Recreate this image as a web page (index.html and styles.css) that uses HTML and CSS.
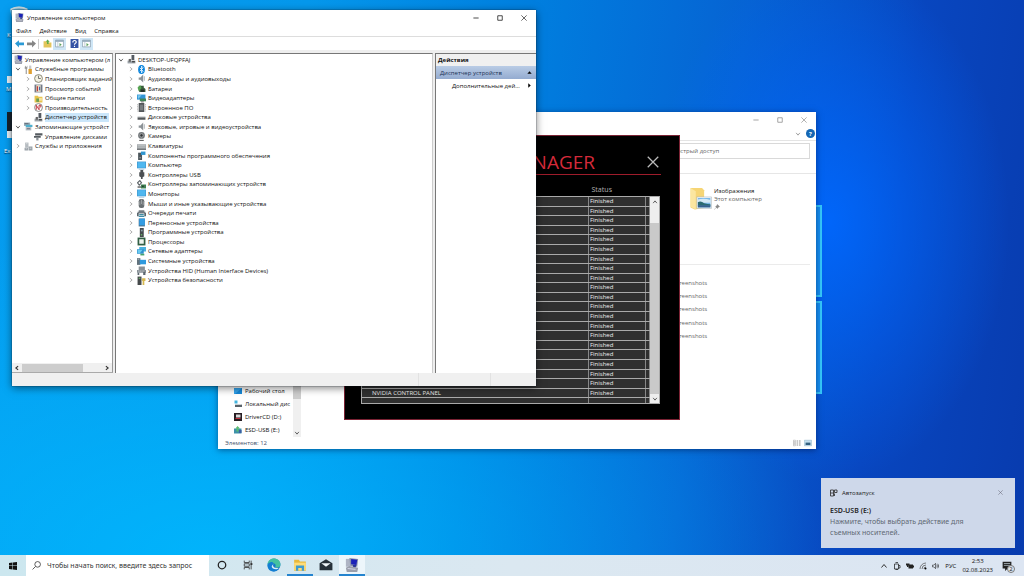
FILE: index.html
```html
<!DOCTYPE html>
<html lang="ru">
<head>
<meta charset="utf-8">
<meta name="viewport" content="width=device-width, initial-scale=1">
<title>Управление компьютером</title>
<link rel="stylesheet" href="styles.css">
</head>
<body>
<svg class="sprite" aria-hidden="true">
  <symbol id="down" viewBox="0 0 16 16"><path d="M3 5l5 6 5-6" fill="none" stroke="#333" stroke-width="2"/></symbol>
  <symbol id="up" viewBox="0 0 16 16"><path d="M3 11l5-6 5 6" fill="none" stroke="#333" stroke-width="2"/></symbol>
  <symbol id="right" viewBox="0 0 16 16"><path d="M5 3l6 5-6 5" fill="none" stroke="#999" stroke-width="2"/></symbol>
  <symbol id="left" viewBox="0 0 16 16"><path d="M11 3L5 8l6 5" fill="none" stroke="#333" stroke-width="3"/></symbol>
  <symbol id="forward" viewBox="0 0 16 16"><path d="M5 3l6 5-6 5" fill="none" stroke="#333" stroke-width="3"/></symbol>
  <symbol id="min" viewBox="0 0 16 16"><path d="M1 8h14" stroke="currentColor" stroke-width="2"/></symbol>
  <symbol id="max" viewBox="0 0 16 16"><path d="M2 2h12v12H2z" fill="none" stroke="currentColor" stroke-width="2"/></symbol>
  <symbol id="close" viewBox="0 0 16 16"><path d="M1 1l14 14M15 1L1 15" fill="none" stroke="currentColor" stroke-width="1.7"/></symbol>
  <symbol id="mmc" viewBox="0 0 16 16"><path d="M1 1h5v9H1z" fill="#aeb4c4"/><path d="M5 0l10 1-1 9-8-1z" fill="#8a93ad"/><path d="M7 1l7 1-1 6-6-1z" fill="#1b22b8"/><path d="M9 8h4l-1 3H9z" fill="#2c3598"/><path d="M1 11l4-2 10 2-1 5H2z" fill="#9a9fac"/><path d="M3 12l9 1" stroke="#dde"/></symbol>
  <symbol id="tools" viewBox="0 0 16 16"><path d="M2 1l2 3 2-3v5L5 7v9H3V7L1 6z" fill="#999"/><path d="M9 1h4v7H9z" fill="#c9c9c9"/><path d="M8 7h6v9H8z" fill="#e0a030"/></symbol>
  <symbol id="sched" viewBox="0 0 16 16"><circle cx="8" cy="8" r="7" fill="#f3f1e2" stroke="#85816e" stroke-width="1.6"/><path d="M8 3v5h4" fill="none" stroke="#555" stroke-width="1.4"/></symbol>
  <symbol id="event" viewBox="0 0 16 16"><path d="M1 1h14v14H1z" fill="#707887"/><path d="M4 2h8v12H4z" fill="#e9dfc6"/><path d="M6 4v9" stroke="#c03030" stroke-width="2"/><path d="M10 5v6" stroke="#365fa8" stroke-width="2"/></symbol>
  <symbol id="share" viewBox="0 0 16 16"><path d="M1 3h6l1 2h7v10H1z" fill="#e8c44e"/><path d="M4 8h5v6H4z" fill="#6d9d50"/><path d="M9 7h5v5H9z" fill="#f6e39c"/></symbol>
  <symbol id="perf" viewBox="0 0 16 16"><circle cx="8" cy="8" r="7" fill="#fff" stroke="#777" stroke-width="1.5"/><path d="M4 12V4l5 8V4h3v4" fill="none" stroke="#c2303b" stroke-width="1.7"/></symbol>
  <symbol id="dev" viewBox="0 0 16 16"><path d="M8 0h5v9H8z" fill="#555b62"/><path d="M1 10h14v5H1z" fill="#9ba2a8"/><path d="M3 7h4v5H3z" fill="#666"/><path d="M9 12h5" stroke="#333" stroke-width="2"/></symbol>
  <symbol id="storage" viewBox="0 0 16 16"><path d="M0 1h11v6H0z" fill="#99abb5"/><path d="M3 5h12v4H3z" fill="#4fb1cf"/><path d="M3 9h10v6H3z" fill="#b7bfc5"/><path d="M1 3h7M5 12h6" stroke="#334"/></symbol>
  <symbol id="disks" viewBox="0 0 16 16"><path d="M2 2h13v4H2zM0 7h12v3H0z" fill="#555b60"/><path d="M4 10h4v5H4z" fill="#8a9096"/></symbol>
  <symbol id="services" viewBox="0 0 16 16"><path d="M2 1h6v9H2z" fill="#b6bcc1"/><path d="M1 10h6v5H1zM8 8h7v7H8z" fill="#99a1a8"/><path d="M3 12h2M10 11h3M4 3h2" stroke="#fff"/></symbol>
  <symbol id="bt" viewBox="0 0 16 16"><ellipse cx="8" cy="8" rx="6" ry="8" fill="#0a84dc"/><path d="M5 5l6 6-3 3V2l3 3-6 6" fill="none" stroke="#fff" stroke-width="1.4"/></symbol>
  <symbol id="audio" viewBox="0 0 16 16"><path d="M3 6h3l5-5v14l-5-5H3z" fill="#8c9297"/><path d="M13 4v8" stroke="#b6babd" stroke-width="2"/></symbol>
  <symbol id="battery" viewBox="0 0 16 16"><path d="M3 3h9v3l3 3v5H4z" fill="#395c3c"/><path d="M1 6l5-4 2 5-5 6z" fill="#55a551"/><path d="M7 10h6v4H7z" fill="#292f2b"/></symbol>
  <symbol id="video" viewBox="0 0 16 16"><path d="M0 1h15v9H0z" fill="#3295d5"/><path d="M1 2h7L2 9z" fill="#7ac8ee"/><path d="M5 8h11v5H5z" fill="#42875a"/><path d="M7 13h5v2H7z" fill="#777"/></symbol>
  <symbol id="firmware" viewBox="0 0 16 16"><path d="M3 0h10v16H3z" fill="#53575a"/><path d="M5 3h6v10H5z" fill="#777d80"/><path d="M1 2v13M15 2v13" stroke="#888" stroke-dasharray="2 1"/></symbol>
  <symbol id="drive" viewBox="0 0 16 16"><path d="M1 6h14v3H1z" fill="#c4c7c9"/><path d="M1 8h14v4H1z" fill="#54585b"/></symbol>
  <symbol id="camera" viewBox="0 0 16 16"><circle cx="8" cy="6" r="6" fill="#73787b"/><circle cx="8" cy="6" r="3" fill="#303437" stroke="#ccc"/><path d="M4 14h8v2H4z" fill="#666"/></symbol>
  <symbol id="keyboard" viewBox="0 0 16 16"><path d="M0 4h16v9H0z" fill="#a0a5a8"/><path d="M1 6h14M1 9h14" stroke="#d6d9da"/><path d="M0 12h16v2H0z" fill="#666b6e"/></symbol>
  <symbol id="component" viewBox="0 0 16 16"><path d="M2 3h7v13H2z" fill="#4b555b"/><path d="M7 1h8v6H7z" fill="#3096cf"/><path d="M4 12h3" stroke="#ddd"/></symbol>
  <symbol id="monitor" viewBox="0 0 16 16"><path d="M0 1h16v12H0z" fill="#3f93ca"/><path d="M1 2h14v10H1z" fill="#4fb7ef"/><path d="M3 14h10v1H3z" fill="#73a5c6"/></symbol>
  <symbol id="usb" viewBox="0 0 16 16"><path d="M6 0h5v4h2v7l-3 2v3H7v-3l-3-2V4h2z" fill="#4c5053"/></symbol>
  <symbol id="scontrol" viewBox="0 0 16 16"><path d="M5 1l3 4-4 4-3-4z" fill="none" stroke="#5d6468" stroke-width="2"/><path d="M1 11h6v3H1z" fill="#777"/><path d="M7 8h9v7H7z" fill="#3f8052"/><path d="M9 10h3v2H9z" fill="#222"/></symbol>
  <symbol id="mouse" viewBox="0 0 16 16"><rect x="3" y="0" width="10" height="16" rx="4" fill="#686e71"/><path d="M8 1v8M5 4v7M11 4v7" stroke="#c4c8ca"/></symbol>
  <symbol id="printer" viewBox="0 0 16 16"><path d="M3 2h10v3H3zM1 5h14v3H1z" fill="#717b82"/><path d="M0 7h3v6H0zM13 7h3v6h-3z" fill="#59656c"/><path d="M4 9h8v2H4zM3 12h10v2H3z" fill="#408ca4"/></symbol>
  <symbol id="portable" viewBox="0 0 16 16"><path d="M3 1h11v14H3z" fill="#48728e"/><path d="M4 1h10v12H4z" fill="#349de3"/></symbol>
  <symbol id="softdev" viewBox="0 0 16 16"><path d="M5 0h7v16H5z" fill="#454b4e"/><path d="M7 3h3v3H7z" fill="#8da1ac"/><circle cx="8" cy="12" r="1.5" fill="#66ad64"/></symbol>
  <symbol id="cpu" viewBox="0 0 16 16"><path d="M1 1h14v14H1z" fill="#315e44"/><path d="M4 4h8v8H4z" fill="#eef3ee"/></symbol>
  <symbol id="net" viewBox="0 0 16 16"><path d="M4 0h12v8H4z" fill="#49b0de"/><path d="M0 4h12v8H0z" fill="#2e8fce"/><path d="M1 5h9l-5 6H1z" fill="#6bcaf0"/><path d="M6 12h7v3H6z" fill="#46a36d"/></symbol>
  <symbol id="sys" viewBox="0 0 16 16"><path d="M0 2h6v12H0z" fill="#62727c"/><path d="M5 5h11v8H5z" fill="#309ade"/><path d="M1 4h3" stroke="#ddd"/></symbol>
  <symbol id="hid" viewBox="0 0 16 16"><path d="M3 1h11v6H3zM0 7h16v5H0z" fill="#889096"/><path d="M1 12h3v4H1zM11 10h4v6h-4z" fill="#5d6770"/><path d="M2 9h11" stroke="#eee" stroke-dasharray="2 1"/></symbol>
  <symbol id="secure" viewBox="0 0 16 16"><path d="M1 1h7v15H1z" fill="#45494b"/><path d="M9 4h6v5h-2v7h-3V9H9z" fill="#d7b950"/><path d="M3 4h3" stroke="#6bb56c" stroke-width="2"/></symbol>
  <symbol id="pane" viewBox="0 0 16 16"><path d="M1 2h14v12H1z" fill="#fff" stroke="#71879a"/><path d="M1 2h14v3H1z" fill="#91a7b9"/><path d="M5 5v9" stroke="#91a7b9"/><path d="M8 7l4 3-4 3z" fill="#5ba05b"/></symbol>
</svg>

<main class="desktop">
  <div class="wallpaper" aria-hidden="true"><span class="glass glass-top"></span><span class="glass glass-bottom"></span></div>
  <div class="shortcuts">
    <svg class="bin" viewBox="0 0 24 16"><path d="M1 5c5-5 17-5 22 0l-3 11H4z" fill="#6fb8da"/><path d="M2 5c6-3 14-3 20 0" fill="none" stroke="#c9dce3" stroke-width="2"/></svg>
    <span class="shortcut-label first">К</span>
    <span class="shortcut-arrow upper"></span>
    <span class="shortcut-label second">M</span>
    <span class="shortcut-tile"></span>
    <span class="shortcut-arrow lower"></span>
    <span class="shortcut-label third">Ex</span>
  </div>

  <section class="window explorer" aria-label="Проводник">
    <header class="explorer-title">
      <div class="caption muted">
        <button aria-label="Свернуть"><svg><use href="#min"/></svg></button>
        <button aria-label="Развернуть"><svg><use href="#max"/></svg></button>
        <button aria-label="Закрыть"><svg><use href="#close"/></svg></button>
      </div>
    </header>
    <div class="ribbon">
      <button aria-label="Развернуть ленту"><svg class="icon-s"><use href="#down"/></svg></button>
      <button class="help" aria-label="Справка">?</button>
    </div>
    <div class="address"><input type="text" aria-label="Поиск" placeholder="Быстрый доступ"></div>
    <div class="explorer-body">
      <nav class="places">
        <ul>
          <li><svg viewBox="0 0 16 16"><path d="M0 2h16v12H0z" fill="#1588d8"/><path d="M0 2h16L2 14H0z" fill="#35a3eb"/></svg><a href="#">Рабочий стол</a></li>
          <li><svg viewBox="0 0 16 16"><path d="M1 1h6v6H1z" fill="#42b4df"/><path d="M2 9h14v5H2z" fill="#596269"/><path d="M2 8h13v2H2z" fill="#cdd2d4"/></svg><a href="#">Локальный дис</a></li>
          <li><svg viewBox="0 0 16 16"><path d="M0 0h16v16H0z" fill="#251d22"/><path d="M4 3h9v6H4z" fill="#d9d8d9"/><path d="M3 11h10" stroke="#c62e3c" stroke-width="2"/></svg><a href="#">DriverCD (D:)</a></li>
          <li><svg viewBox="0 0 16 16"><path d="M0 5h15v10H0z" fill="#3e91a9"/><path d="M7 0l5 5H9v6H5V5H3z" fill="#5bbd72"/><path d="M10 8h5v6h-5z" fill="#3c5fa4"/></svg><a href="#">ESD-USB (E:)</a></li>
        </ul>
      </nav>
      <div class="places-scroll"><span class="places-thumb"></span><svg class="icon-s"><use href="#down"/></svg></div>
      <div class="files">
        <article class="folder">
          <svg class="folder-icon" viewBox="0 0 42 44"><path d="M1 2h22l4 4v34l-18 3-8-4z" fill="#f6d575"/><path d="M1 2l10 6v35L1 38z" fill="#fbe6a0"/><path d="M13 19h28v22H13z" fill="#f5f8fa" stroke="#a5afb6"/><path d="M15 21h24v18H15z" fill="#79b8e8"/><path d="M15 24q12-3 24 1v5H15z" fill="#d5e9f5"/><path d="M15 29q6-3 12 2 7 2 12 2v3H15z" fill="#2c6b72"/><path d="M15 35h24v4H15z" fill="#37618e"/></svg>
          <div class="folder-text"><strong>Изображения</strong><span>Этот компьютер</span>
          <svg viewBox="0 0 16 16"><path d="M9 1l6 6-3 1-3 4-5-5 4-3zM5 10l-4 5" fill="#888" stroke="#777"/></svg></div>
        </article>
        <ul class="recent"><li>Screenshots</li><li>Screenshots</li><li>Screenshots</li><li>Screenshots</li><li>Screenshots</li></ul>
      </div>
    </div>
    <footer class="explorer-status"><span>Элементов: 12</span>
      <div class="views"><svg viewBox="0 0 20 16"><path d="M1 1h5v4H1zM1 6h5v4H1zM1 11h5v4H1z" fill="none" stroke="#888"/><path d="M9 3h4M9 8h4M9 13h4M15 3h4M15 8h4M15 13h4" stroke="#777" stroke-width="2"/></svg><svg viewBox="0 0 20 16"><path d="M1 1h18v14H1z" fill="#c4dfef" stroke="#78a5bd"/><path d="M4 7h12v6H4z" fill="#346080"/></svg></div>
    </footer>
  </section>

  <section class="manager" aria-label="Manager">
    <header class="manager-head"><h2>MANAGER</h2><button aria-label="Close"><svg><use href="#close"/></svg></button></header>
    <div class="manager-columns"><span>Status</span></div>
    <div class="manager-list">
      <table>
        <tbody>
          <tr><td></td><td>Finished</td><td></td></tr>
          <tr><td></td><td>Finished</td><td></td></tr>
          <tr><td></td><td>Finished</td><td></td></tr>
          <tr><td></td><td>Finished</td><td></td></tr>
          <tr><td></td><td>Finished</td><td></td></tr>
          <tr><td></td><td>Finished</td><td></td></tr>
          <tr><td></td><td>Finished</td><td></td></tr>
          <tr><td></td><td>Finished</td><td></td></tr>
          <tr><td></td><td>Finished</td><td></td></tr>
          <tr><td></td><td>Finished</td><td></td></tr>
          <tr><td></td><td>Finished</td><td></td></tr>
          <tr><td></td><td>Finished</td><td></td></tr>
          <tr><td></td><td>Finished</td><td></td></tr>
          <tr><td></td><td>Finished</td><td></td></tr>
          <tr><td></td><td>Finished</td><td></td></tr>
          <tr><td></td><td>Finished</td><td></td></tr>
          <tr><td></td><td>Finished</td><td></td></tr>
          <tr><td></td><td>Finished</td><td></td></tr>
          <tr><td></td><td>Finished</td><td></td></tr>
          <tr><td></td><td>Finished</td><td></td></tr>
          <tr><td>NVIDIA CONTROL PANEL</td><td>Finished</td><td></td></tr>
          <tr><td></td><td></td><td></td></tr>
        </tbody>
      </table>
      <div class="manager-scroll"><button aria-label="Up"><svg><use href="#up"/></svg></button><span></span><button aria-label="Down"><svg><use href="#down"/></svg></button></div>
    </div>
  </section>

  <section class="window console" aria-label="Управление компьютером">
    <header class="console-title"><svg class="icon"><use href="#mmc"/></svg><h1>Управление компьютером</h1>
      <div class="caption">
        <button aria-label="Свернуть"><svg><use href="#min"/></svg></button>
        <button aria-label="Развернуть"><svg><use href="#max"/></svg></button>
        <button aria-label="Закрыть"><svg><use href="#close"/></svg></button>
      </div>
    </header>
    <nav class="menu"><button>Файл</button><button>Действие</button><button>Вид</button><button>Справка</button></nav>
    <div class="toolbar">
      <button aria-label="Назад"><svg viewBox="0 0 16 16"><path d="M0 8l7-6v4h9v5H7v4z" fill="#2b9ad5"/></svg></button>
      <button aria-label="Вперёд"><svg viewBox="0 0 16 16"><path d="M16 8L9 2v4H0v5h9v4z" fill="#858585"/></svg></button>
      <span class="separator"></span>
      <button aria-label="Вверх"><svg viewBox="0 0 16 16"><path d="M1 4h5l2 2h7v9H1z" fill="#e3c55b"/><path d="M8 1l4 4h-2v4H7V5H5z" fill="#5fab49"/></svg></button>
      <button class="on" aria-label="Дерево консоли"><svg><use href="#pane"/></svg></button>
      <button aria-label="Справка"><svg viewBox="0 0 16 16"><path d="M1 0h14v16H1z" fill="#3553a5"/><path d="M5 6c0-5 7-4 6 0-1 2-3 2-3 4M8 12v2" fill="none" stroke="#fff" stroke-width="2"/></svg></button>
      <button class="on" aria-label="Область действий"><svg><use href="#pane"/></svg></button>
    </div>
    <div class="panes">
      <div class="pane side">
        <ul class="tree side-tree">
          <li><svg class="icon"><use href="#mmc"/></svg>Управление компьютером (л</li>
          <li><button aria-label="Свернуть"><svg><use href="#down"/></svg></button><svg class="icon"><use href="#tools"/></svg>Служебные программы</li>
          <li class="deep"><button aria-label="Развернуть"><svg><use href="#right"/></svg></button><svg class="icon"><use href="#sched"/></svg>Планировщик заданий</li>
          <li class="deep"><button aria-label="Развернуть"><svg><use href="#right"/></svg></button><svg class="icon"><use href="#event"/></svg>Просмотр событий</li>
          <li class="deep"><button aria-label="Развернуть"><svg><use href="#right"/></svg></button><svg class="icon"><use href="#share"/></svg>Общие папки</li>
          <li class="deep"><button aria-label="Развернуть"><svg><use href="#right"/></svg></button><svg class="icon"><use href="#perf"/></svg>Производительность</li>
          <li class="deep leaf"><svg class="icon"><use href="#dev"/></svg><span class="selected">Диспетчер устройств</span></li>
          <li><button aria-label="Свернуть"><svg><use href="#down"/></svg></button><svg class="icon"><use href="#storage"/></svg>Запоминающие устройст</li>
          <li class="deep leaf"><svg class="icon"><use href="#disks"/></svg>Управление дисками</li>
          <li><button aria-label="Развернуть"><svg><use href="#right"/></svg></button><svg class="icon"><use href="#services"/></svg>Службы и приложения</li>
        </ul>
        <div class="hscroll"><button aria-label="Влево"><svg><use href="#left"/></svg></button><span></span><button aria-label="Вправо"><svg><use href="#forward"/></svg></button></div>
      </div>
      <div class="pane devices">
        <ul class="tree device-tree">
          <li><button aria-label="Свернуть"><svg><use href="#down"/></svg></button><svg class="icon"><use href="#dev"/></svg>DESKTOP-UFQPFAJ</li>
          <li class="deep"><button aria-label="Развернуть"><svg><use href="#right"/></svg></button><svg class="icon"><use href="#bt"/></svg>Bluetooth</li>
          <li class="deep"><button aria-label="Развернуть"><svg><use href="#right"/></svg></button><svg class="icon"><use href="#audio"/></svg>Аудиовходы и аудиовыходы</li>
          <li class="deep"><button aria-label="Развернуть"><svg><use href="#right"/></svg></button><svg class="icon"><use href="#battery"/></svg>Батареи</li>
          <li class="deep"><button aria-label="Развернуть"><svg><use href="#right"/></svg></button><svg class="icon"><use href="#video"/></svg>Видеоадаптеры</li>
          <li class="deep"><button aria-label="Развернуть"><svg><use href="#right"/></svg></button><svg class="icon"><use href="#firmware"/></svg>Встроенное ПО</li>
          <li class="deep"><button aria-label="Развернуть"><svg><use href="#right"/></svg></button><svg class="icon"><use href="#drive"/></svg>Дисковые устройства</li>
          <li class="deep"><button aria-label="Развернуть"><svg><use href="#right"/></svg></button><svg class="icon"><use href="#audio"/></svg>Звуковые, игровые и видеоустройства</li>
          <li class="deep"><button aria-label="Развернуть"><svg><use href="#right"/></svg></button><svg class="icon"><use href="#camera"/></svg>Камеры</li>
          <li class="deep"><button aria-label="Развернуть"><svg><use href="#right"/></svg></button><svg class="icon"><use href="#keyboard"/></svg>Клавиатуры</li>
          <li class="deep"><button aria-label="Развернуть"><svg><use href="#right"/></svg></button><svg class="icon"><use href="#component"/></svg>Компоненты программного обеспечения</li>
          <li class="deep"><button aria-label="Развернуть"><svg><use href="#right"/></svg></button><svg class="icon"><use href="#monitor"/></svg>Компьютер</li>
          <li class="deep"><button aria-label="Развернуть"><svg><use href="#right"/></svg></button><svg class="icon"><use href="#usb"/></svg>Контроллеры USB</li>
          <li class="deep"><button aria-label="Развернуть"><svg><use href="#right"/></svg></button><svg class="icon"><use href="#scontrol"/></svg>Контроллеры запоминающих устройств</li>
          <li class="deep"><button aria-label="Развернуть"><svg><use href="#right"/></svg></button><svg class="icon"><use href="#monitor"/></svg>Мониторы</li>
          <li class="deep"><button aria-label="Развернуть"><svg><use href="#right"/></svg></button><svg class="icon"><use href="#mouse"/></svg>Мыши и иные указывающие устройства</li>
          <li class="deep"><button aria-label="Развернуть"><svg><use href="#right"/></svg></button><svg class="icon"><use href="#printer"/></svg>Очереди печати</li>
          <li class="deep"><button aria-label="Развернуть"><svg><use href="#right"/></svg></button><svg class="icon"><use href="#portable"/></svg>Переносные устройства</li>
          <li class="deep"><button aria-label="Развернуть"><svg><use href="#right"/></svg></button><svg class="icon"><use href="#softdev"/></svg>Программные устройства</li>
          <li class="deep"><button aria-label="Развернуть"><svg><use href="#right"/></svg></button><svg class="icon"><use href="#cpu"/></svg>Процессоры</li>
          <li class="deep"><button aria-label="Развернуть"><svg><use href="#right"/></svg></button><svg class="icon"><use href="#net"/></svg>Сетевые адаптеры</li>
          <li class="deep"><button aria-label="Развернуть"><svg><use href="#right"/></svg></button><svg class="icon"><use href="#sys"/></svg>Системные устройства</li>
          <li class="deep"><button aria-label="Развернуть"><svg><use href="#right"/></svg></button><svg class="icon"><use href="#hid"/></svg>Устройства HID (Human Interface Devices)</li>
          <li class="deep"><button aria-label="Развернуть"><svg><use href="#right"/></svg></button><svg class="icon"><use href="#secure"/></svg>Устройства безопасности</li>
        </ul>
      </div>
      <aside class="pane actions">
        <h2>Действия</h2>
        <button class="action-group">Диспетчер устройств<svg viewBox="0 0 16 16"><path d="M1 12l7-8 7 8z"/></svg></button>
        <button class="action-more">Дополнительные дей...<svg viewBox="0 0 16 16"><path d="M4 1l8 7-8 7z"/></svg></button>
      </aside>
    </div>
    <footer class="console-status"><span></span><span></span></footer>
  </section>

  <aside class="toast" role="status">
    <header><svg viewBox="0 0 16 16"><path d="M1 2h6v12H1zM1 8h6M9 2h5v5H9zM9 9v5" fill="none" stroke="#333" stroke-width="1.7"/></svg><span>Автозапуск</span><button aria-label="Закрыть"><svg><use href="#close"/></svg></button></header>
    <strong>ESD-USB (E:)</strong>
    <p>Нажмите, чтобы выбрать действие для съемных носителей.</p>
  </aside>
</main>

<footer class="taskbar">
  <button class="start" aria-label="Пуск"><svg viewBox="0 0 16 16"><path d="M0 2l7-1v6H0zM8 1l8-1v7H8zM0 8h7v7l-7-1zM8 8h8v8l-8-1z" fill="#111"/></svg></button>
  <label class="search"><svg viewBox="0 0 16 16"><circle cx="10" cy="6" r="5" fill="none" stroke="#333" stroke-width="1.4"/><path d="M6 10l-5 5" stroke="#333" stroke-width="1.4"/></svg><input type="text" aria-label="Поиск" placeholder="Чтобы начать поиск, введите здесь запрос"></label>
  <div class="apps">
    <button aria-label="Кортана"><svg viewBox="0 0 16 16"><circle cx="8" cy="8" r="6" fill="none" stroke="#222" stroke-width="2"/></svg></button>
    <button aria-label="Представление задач"><svg viewBox="0 0 16 16"><path d="M2 1v3h8V1M2 15v-3h8v3M2 6h8v4H2zM13 1v14" fill="none" stroke="#333" stroke-width="1.3"/><path d="M12 5h3v3h-3z" fill="#333"/></svg></button>
    <button aria-label="Edge"><svg class="big" viewBox="0 0 24 24"><circle cx="12" cy="12" r="11" fill="#1377c9"/><path d="M1 11C2-3 23-2 23 11c0 6-7 7-9 4 2-3 0-6-4-6-4 0-7 1-9 2z" fill="#43c1a0"/><path d="M1 12c2-6 9-6 10-3-5 3-2 11 9 10-8 8-20 3-19-7z" fill="#137fd3"/><path d="M11 10c-2 5 1 8 9 7-3 4-12 2-12-3z" fill="#dceef4"/></svg></button>
    <button class="open" aria-label="Проводник"><svg class="big" viewBox="0 0 24 24"><path d="M2 3h8l2 3h10v16H2z" fill="#e9b93c"/><path d="M2 8h20v13H2z" fill="#ffdc79"/><path d="M5 13h14v9h-4v-5H9v5H5z" fill="#3e9bd0"/></svg></button>
    <button aria-label="Почта"><svg class="big" viewBox="0 0 24 24"><path d="M1 9l11-7 11 7v12H1z" fill="#263139"/><path d="M4 9h16l-8 6z" fill="#eff6f8"/></svg></button>
    <button class="open current" aria-label="Управление компьютером"><svg class="big"><use href="#mmc"/></svg></button>
  </div>
  <div class="tray">
    <button aria-label="Скрытые значки"><svg><use href="#up"/></svg></button>
    <svg viewBox="0 0 16 16"><path d="M3 4h8v10H3zM5 1h5M11 7h3v5h-3M5 15h5" fill="none" stroke="#222" stroke-width="1.5"/></svg>
    <svg viewBox="0 0 16 16"><path d="M5 5h9v8H5z" fill="#222"/><path d="M14 7h2v4h-2zM0 3h7v4H0zM2 7h3v3H2z" fill="#222"/></svg>
    <svg viewBox="0 0 16 16"><path d="M2 14A12 12 0 0114 2M6 14a8 8 0 018-8M10 14a4 4 0 014-4" fill="none" stroke="#555" stroke-width="1.5"/><circle cx="13" cy="13" r="2"/></svg>
    <svg viewBox="0 0 18 16"><path d="M1 6h3l4-4v12l-4-4H1zM11 5q2 3 0 6M13 3q4 5 0 10" fill="none" stroke="#222" stroke-width="1.4"/></svg>
    <span class="lang">РУС</span>
    <time class="clock"><span>2:53</span><span>02.08.2023</span></time>
    <button class="notes" aria-label="Уведомления"><svg viewBox="0 0 16 16"><path d="M1 1h14v11H9l-4 4v-4H1z" fill="#222"/><path d="M3 4h10M3 7h10" stroke="#d5e4ee"/></svg><span class="badge">2</span></button>
  </div>
</footer>
</body>
</html>
```
FILE: styles.css
```css
* { box-sizing: border-box; }

body {
  margin: 0;
  height: 100vh;
  display: flex;
  flex-direction: column;
  overflow: hidden;
  font: 6px/8px "Open Sans", "Noto Sans", sans-serif;
  color: #111;
}

h1, h2, p, ul { margin: 0; padding: 0; font-size: 6px; font-weight: 400; }
ul { list-style: none; }
button { border: 0; padding: 0; background: none; font: inherit; color: inherit; display: flex; align-items: center; justify-content: center; }
input { border: 0; outline: 0; padding: 0; min-width: 0; background: none; font: inherit; }
a { color: inherit; text-decoration: none; }
svg { width: 8px; height: 8px; flex: none; display: block; }
.sprite { position: absolute; width: 0; height: 0; }
.icon { width: 9px; height: 9px; }
.icon-s { width: 6px; height: 6px; }

.desktop { position: relative; flex: 1; overflow: hidden; }
.wallpaper {
  position: absolute;
  inset: 0;
  background:
    radial-gradient(ellipse 180px 260px at 81% 40%, rgba(0, 104, 255, .9), rgba(0, 90, 235, 0)),
    radial-gradient(ellipse 620px 330px at 20% 100%, rgba(0, 186, 255, .8), rgba(0, 170, 250, 0)),
    linear-gradient(98deg, #069df0 0%, #0598ec 28%, #007fdf 48%, #0663d3 68%, #0846bf 84%, #083bae 100%);
}
.glass { position: absolute; left: 790px; width: 32px; background: #1590f2; border: 2px solid #35c8fb; }
.glass-top { top: 205px; height: 92px; }
.glass-bottom { top: 301px; height: 93px; }

.bin { position: absolute; left: 9px; top: 5px; width: 20px; height: 14px; }
.shortcut-label { position: absolute; color: #fff; text-shadow: 0 1px 1px #024; }
.first { left: 7px; top: 31px; }
.second { left: 6px; top: 85px; }
.third { left: 4px; top: 147px; }
.shortcut-tile { position: absolute; left: 7px; top: 112px; width: 20px; height: 26px; background: #17232e; }
.shortcut-arrow { position: absolute; left: 7px; width: 7px; height: 7px; background: #e9f2f8; }
.upper { top: 76px; }
.lower { top: 131px; }

.window { position: absolute; display: flex; flex-direction: column; background: #fff; }
.caption { display: flex; margin-left: auto; }
.caption button { width: 24px; }
.caption svg { width: 6px; height: 6px; }
.muted { color: #888; }

.console { left: 12px; top: 10px; width: 524px; height: 376px; box-shadow: 0 2px 8px rgba(0, 0, 0, .5), 0 0 1px #123; }
.console-title { display: flex; height: 15px; padding-left: 3px; gap: 3px; align-items: center; }
.menu { display: flex; gap: 8px; height: 12px; padding: 1px 4px 0; border-bottom: 1px solid #ddd; }
.toolbar { display: flex; align-items: center; height: 13px; padding-left: 1px; }
.toolbar button { width: 12px; height: 12px; }
.toolbar svg { width: 9px; height: 9px; }
.toolbar .on { width: 13px; margin-right: 2px; background: #cfe6f6; }
.separator { width: 1px; height: 10px; margin: 0 2px 0 1px; background: #ccc; }
.panes { flex: 1; min-height: 0; display: grid; grid-template-columns: 101px 1fr 101px; gap: 2px; padding-top: 3px; background: #eee; }
.pane { min-width: 0; background: #fff; border-top: 1px solid #777; overflow: hidden; }
.side { display: flex; flex-direction: column; border-right: 1px solid #999; border-bottom: 1px solid #aaa; }
.devices, .actions { border-left: 1px solid #777; }
.devices { border-right: 1px solid #ccc; }

.tree { display: grid; grid-auto-rows: 1fr; padding-top: 1px; white-space: nowrap; }
.side-tree { height: 97px; }
.device-tree { height: 231px; }
.tree li { display: flex; align-items: center; gap: 2px; padding-left: 2px; min-height: 0; }
.tree button { width: 8px; height: 8px; }
.tree button svg { width: 6px; height: 6px; }
.tree .deep { padding-left: 12px; }
.tree .leaf { padding-left: 22px; }
.device-tree li { padding-left: 1px; }
.device-tree .deep { padding-left: 11px; }
.selected { display: flex; align-items: center; align-self: stretch; padding-right: 2px; background: #cbe6fa; }

.hscroll { display: flex; align-items: center; height: 9px; margin-top: auto; background: #f0f0f0; }
.hscroll button { width: 10px; }
.hscroll svg { width: 6px; height: 6px; }
.hscroll span { width: 61px; height: 8px; margin-right: auto; background: #cdcdcd; }

.actions h2 { height: 12px; padding-left: 2px; line-height: 12px; font-weight: 700; background: #f0f0f0; }
.actions button { width: 100%; height: 13px; padding-right: 4px; justify-content: space-between; }
.actions svg { width: 5px; height: 5px; }
.actions .action-group { padding-left: 4px; color: #1c3154; background: linear-gradient(#b9cce5, #94abd0); }
.actions .action-more { padding-left: 16px; }
.console-status { display: flex; justify-content: flex-end; height: 13px; background: #f0f0f0; }
.console-status span { width: 46px; border-left: 1px solid #e2e2e2; }
.console-status span:first-child { width: 72px; }

.explorer { left: 218px; top: 112px; width: 598px; height: 337px; box-shadow: 0 1px 6px rgba(0, 10, 50, .5); }
.explorer-title { display: flex; height: 15px; }
.ribbon { display: flex; justify-content: flex-end; align-items: center; gap: 5px; height: 14px; padding-right: 1px; border-bottom: 1px solid #e4e4e4; }
.ribbon .icon-s { opacity: .6; }
.help { width: 9px; height: 9px; border-radius: 50%; background: #1567b4; color: #fff; font-weight: 700; }
.address { display: flex; height: 33px; padding: 2px 6px 14px; border-bottom: 1px solid #e6e6e6; }
.address input { flex: 1; padding-left: 447px; border: 1px solid #d9d9d9; }
.address input::placeholder { color: #666; opacity: 1; }
.explorer-body { flex: 1; min-height: 0; display: flex; }
.places { width: 75px; padding: 0 0 1px 16px; display: flex; flex-direction: column; justify-content: flex-end; overflow: hidden; white-space: nowrap; }
.places ul { display: grid; grid-auto-rows: 1fr; height: 51px; }
.places li { display: flex; align-items: center; gap: 3px; }
.places-scroll { display: flex; flex-direction: column; justify-content: space-between; align-items: center; width: 8px; padding-bottom: 1px; background: #f0f0f0; }
.places-thumb { width: 100%; height: 225px; background: #cdcdcd; }
.files { flex: 1; padding: 13px 6px 0 171px; }
.folder { display: flex; gap: 2px; height: 78px; padding-left: 218px; border-bottom: 1px solid #ebebeb; }
.folder-icon { width: 22px; height: 23px; }
.folder-text { display: flex; flex-direction: column; }
.folder-text strong { font-weight: 400; }
.folder-text span, .recent { color: #666; }
.folder-text span { margin-bottom: 1px; }
.folder-text svg { width: 6px; height: 6px; }
.recent { display: grid; grid-auto-rows: 1fr; align-items: center; height: 67px; margin-top: 11px; padding-left: 201px; }
.explorer-status { display: flex; align-items: center; justify-content: space-between; height: 12px; padding: 0 4px 0 7px; color: #44516b; }
.views { display: flex; gap: 3px; }

.manager { position: absolute; left: 344px; top: 135px; width: 336px; height: 285px; padding: 0 18px 0 16px; background: #000; border: 1px solid #7b2334; color: #eee; display: flex; flex-direction: column; }
.manager-head { display: flex; align-items: flex-end; justify-content: flex-end; height: 39px; gap: 52px; border-bottom: 1px solid #9e1c2b; }
.manager-head h2 { font-size: 19px; line-height: 24px; font-weight: 400; color: #d42a3a; }
.manager-head button { height: 24px; padding-right: 2px; }
.manager-head button svg { width: 12px; height: 12px; color: #bbb; }
.manager-columns { display: flex; justify-content: flex-end; height: 21px; padding: 11px 49px 0 0; font: 7px/8px "Noto Sans", sans-serif; color: #aaa; }
.manager-list { display: flex; height: 208px; border: 1px solid #aaa; margin-right: 1px; }
.manager table { flex: 1; display: block; overflow: hidden; background: #303030; }
.manager tbody { display: grid; grid-auto-rows: 1fr; height: 211px; }
.manager tr { display: grid; grid-template-columns: 1fr 57px 4px; min-height: 0; border-bottom: 1px solid #aaa; }
.manager td { padding: 0 0 0 1px; border-right: 1px solid #888; line-height: 9px; min-height: 0; }
.manager td:first-child { padding-left: 10px; }
.manager-scroll { width: 9px; display: flex; flex-direction: column; background: #eee; }
.manager-scroll button { height: 9px; }
.manager-scroll svg { width: 6px; height: 6px; }
.manager-scroll span { flex: 1; margin-top: 17px; background: #c9c9c9; }

.toast { position: absolute; right: 9px; bottom: 7px; width: 194px; min-height: 70px; padding: 9px; background: #ced8ea; font: 7px/11px "Noto Sans", sans-serif; color: #606873; }
.toast header { display: flex; align-items: center; gap: 4px; height: 11px; margin-bottom: 7px; padding: 0 3px 0 0; font: 6px/8px "Open Sans", sans-serif; color: #222; }
.toast header button { margin-left: auto; color: #667; }
.toast header button svg { width: 5px; height: 5px; }
.toast strong { display: block; color: #222; font-weight: 600; }
.toast p { font-size: 7px; padding-right: 20px; }

.taskbar { display: flex; height: 21px; background: linear-gradient(90deg, #cce7ef, #dbe8f1 50%, #dce5f2); }
.start { width: 26px; }
.search { display: flex; align-items: center; gap: 6px; width: 183px; padding: 0 0 0 6px; background: #fff; }
.search svg { width: 9px; height: 9px; }
.search input { flex: 1; font: 7px/10px "Noto Sans", sans-serif; height: 16px; }
.search input::placeholder { color: #333; opacity: 1; }
.apps { display: flex; }
.apps button { width: 26px; border-bottom: 2px solid transparent; }
.apps svg { width: 10px; height: 10px; }
.apps .big { width: 14px; height: 14px; }
.apps .open { border-color: #2484cf; }
.apps .current { background: #edf6fb; }
.tray { display: flex; align-items: center; gap: 5px; margin-left: auto; padding-right: 12px; }
.lang { margin-right: 1px; }
.clock { display: flex; flex-direction: column; align-items: center; line-height: 9px; }
.notes { position: relative; margin-left: 4px; }
.notes svg { width: 10px; height: 10px; }
.badge { position: absolute; left: 5px; top: 4px; width: 8px; height: 8px; border: 1px solid #777; border-radius: 50%; background: #dfe7f0; line-height: 6px; color: #222; }
```
